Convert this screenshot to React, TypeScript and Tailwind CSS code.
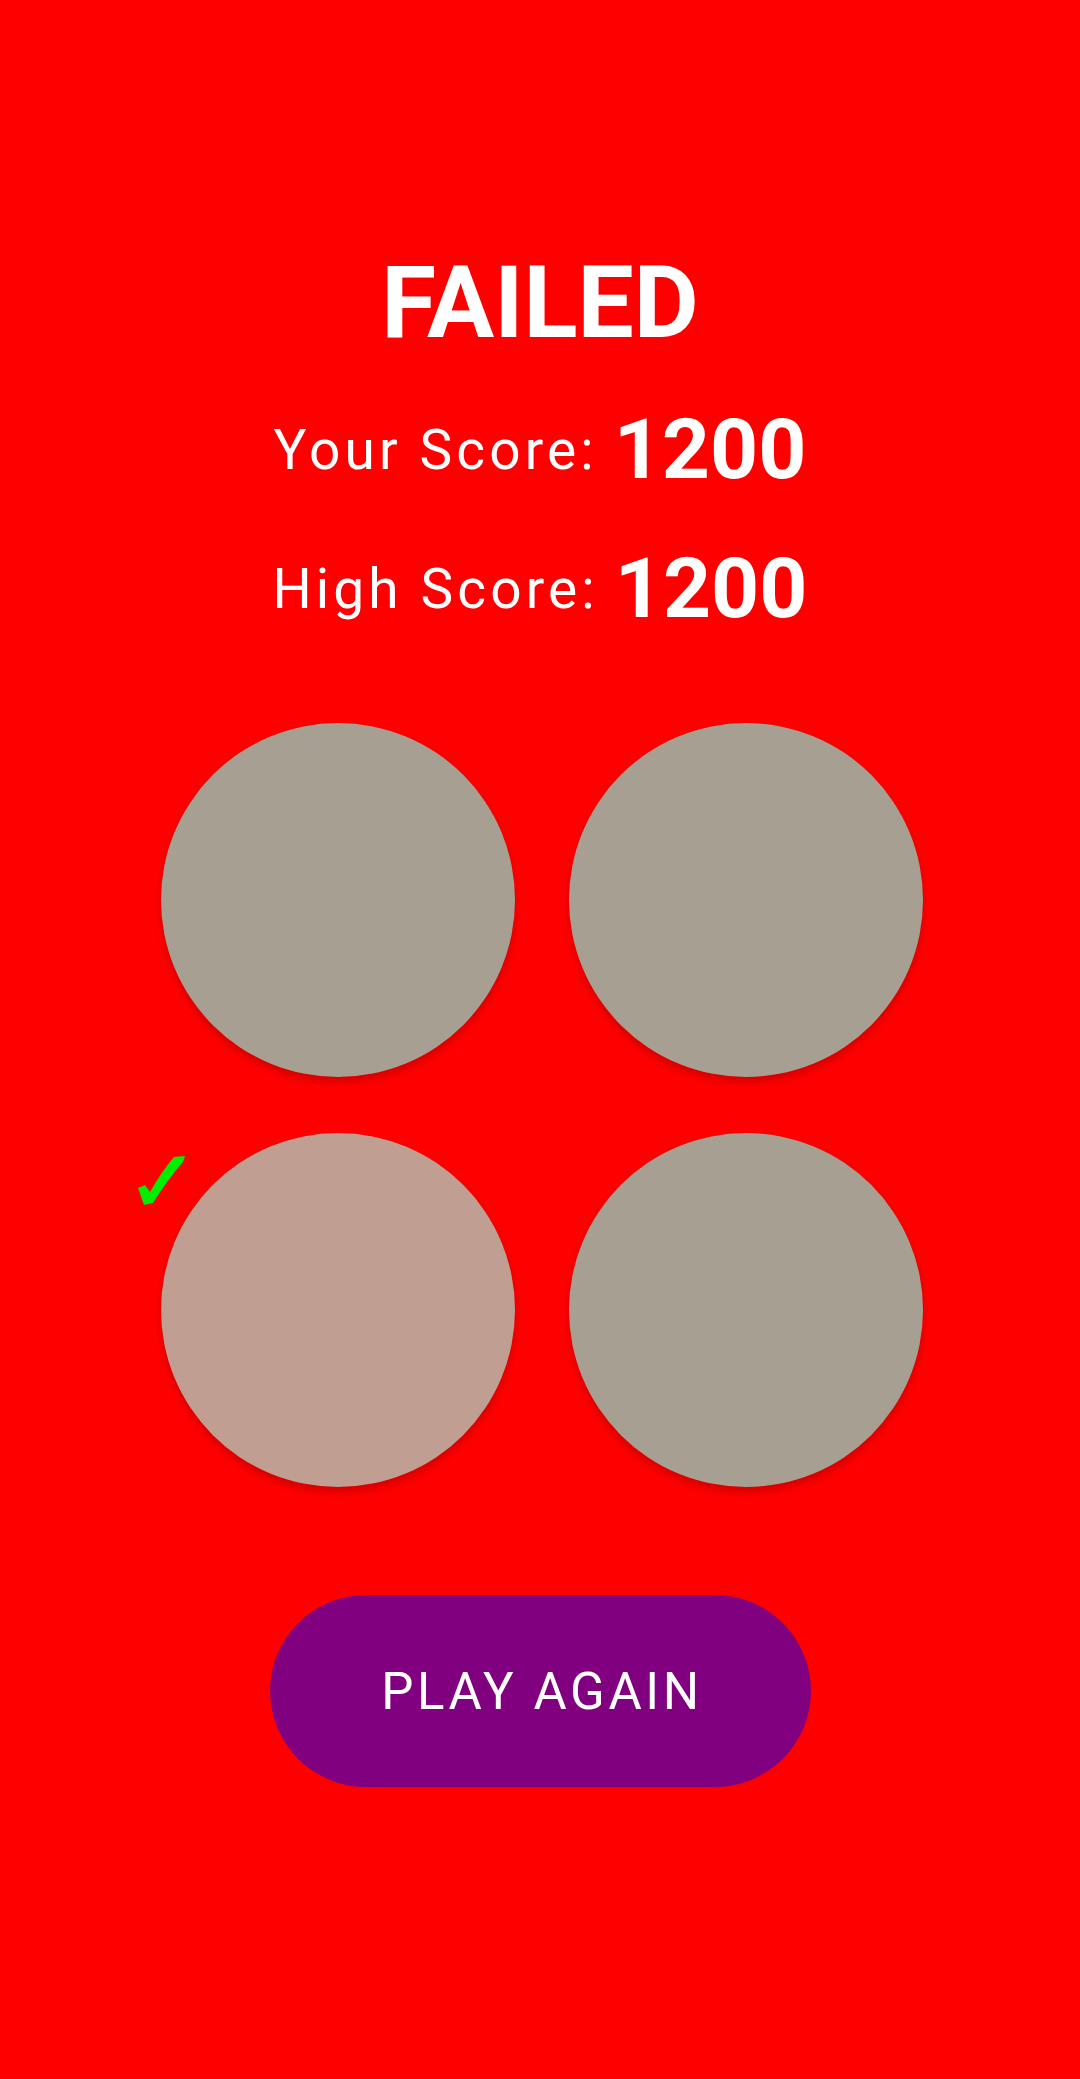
import React from 'react';

const Circle = ({ color, checked }: { color: string; checked?: boolean }) => {
  return (
    <div className="relative">
      <button
        className={`block h-[354px] w-[354px] rounded-full shadow-[0_5px_8px_rgba(0,0,0,0.18)] ${color}`}
      />
      {checked && (
        <svg
          className="absolute left-[-23px] top-[22px] h-[51px] w-[48px]"
          viewBox="0 0 48 51"
        >
          <path d="M0 33 L7 30 L12 37 Q24 16 36 2 L47 1 L45 7 Q30 24 15 48 L6 50 Z" fill="#00ee00" />
        </svg>
      )}
    </div>
  );
};

const ScoreRow = ({ label, value }: { label: string; value: number }) => (
  <div className="flex items-center gap-[16px]">
    <span className="text-[55px] leading-none font-normal tracking-[0.075em]">{label}</span>
    <span className="text-[84px] leading-none font-bold">{value}</span>
  </div>
);

const App = () => {
  const score = 1200;
  const highScore = 1200;

  return (
    <div className="min-h-screen w-full bg-[#ff0000] font-['Roboto',sans-serif] text-white">
      <div className="flex flex-col items-center pt-[253px]">
        <h1 className="text-[100px] leading-none font-bold">FAILED</h1>

        <div className="mt-[55px]">
          <ScoreRow label="Your Score:" value={score} />
        </div>
        <div className="mt-[55px]">
          <ScoreRow label="High Score:" value={highScore} />
        </div>

        {/* answer circles */}
        <div className="mt-[92px] ml-[4px] grid grid-cols-2 gap-x-[54px] gap-y-[56px]">
          <Circle color="bg-[#a7a092]" />
          <Circle color="bg-[#a7a092]" />
          <Circle color="bg-[#c09e91]" checked />
          <Circle color="bg-[#a7a092]" />
        </div>

        <button className="mt-[108px] flex h-[192px] w-[541px] items-center justify-center rounded-full bg-[#800080] pl-[4px] text-[51px] leading-none font-normal tracking-[0.07em]">
          PLAY AGAIN
        </button>
      </div>
    </div>
  );
};

export default App;
